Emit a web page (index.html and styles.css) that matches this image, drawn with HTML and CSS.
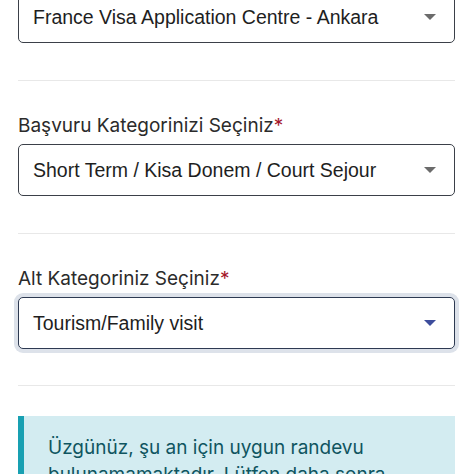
FILE: index.html
```html
<!DOCTYPE html>
<html lang="tr">
<head>
<meta charset="utf-8">
<link rel="stylesheet" href="styles.css">
</head>
<body>
<div class="page">
  <div class="group first">
    <div class="select">
      <span class="value">France Visa Application Centre - Ankara</span>
      <span class="caret"></span>
    </div>
  </div>
  <hr class="divider">
  <div class="group">
    <label class="label">Başvuru Kategorinizi Seçiniz<span class="req">*</span></label>
    <div class="select">
      <span class="value">Short Term / Kisa Donem / Court Sejour</span>
      <span class="caret"></span>
    </div>
  </div>
  <hr class="divider">
  <div class="group">
    <label class="label">Alt Kategoriniz Seçiniz<span class="req">*</span></label>
    <div class="select focused">
      <span class="value">Tourism/Family visit</span>
      <span class="caret blue"></span>
    </div>
  </div>
  <hr class="divider">
  <div class="alert">
    Üzgünüz, şu an için uygun randevu bulunamamaktadır. Lütfen daha sonra tekrar deneyiniz.
  </div>
</div>
</body>
</html>
```
FILE: styles.css
```css
html, body {
  margin: 0;
  padding: 0;
  background: #ffffff;
  overflow: hidden;
}
.page {
  padding: 0 19px 0 18px;
  font-family: Inter, "Noto Sans", sans-serif;
}
.group {
  display: flex;
  flex-direction: column;
}
.first {
  margin-top: -9px;
}
.label {
  font-size: 19px;
  line-height: 22px;
  color: #2b2b2b;
  margin-bottom: 7px;
}
.req {
  color: #a3152a;
}
.select {
  box-sizing: border-box;
  height: 52px;
  border: 1.5px solid #3b4049;
  border-radius: 5px;
  display: flex;
  align-items: center;
  justify-content: space-between;
  padding: 0 18px 0 14px;
  font-family: "Liberation Sans", Arial, sans-serif;
  font-size: 19.5px;
  color: #1e1e1e;
  background: #fff;
}
.select.focused {
  box-shadow: 0 0 0 4px #dde2ea;
  border-color: #2e3a52;
}
.caret {
  width: 0;
  height: 0;
  border-left: 6px solid transparent;
  border-right: 6px solid transparent;
  border-top: 6px solid #6b6b6b;
}
.caret.blue {
  border-top-color: #3d4d9c;
}
.divider {
  border: 0;
  height: 1px;
  background: #e8e8e8;
  margin: 37px 0 34px;
}
.divider:last-of-type {
  margin-top: 36px;
}
.alert {
  margin-top: -4px;
  background: #d3ecf1;
  border-left: 6px solid #18a0b2;
  padding: 18px 24px 20px 24px;
  color: #0f5560;
  font-size: 19px;
  line-height: 27px;
}
```
